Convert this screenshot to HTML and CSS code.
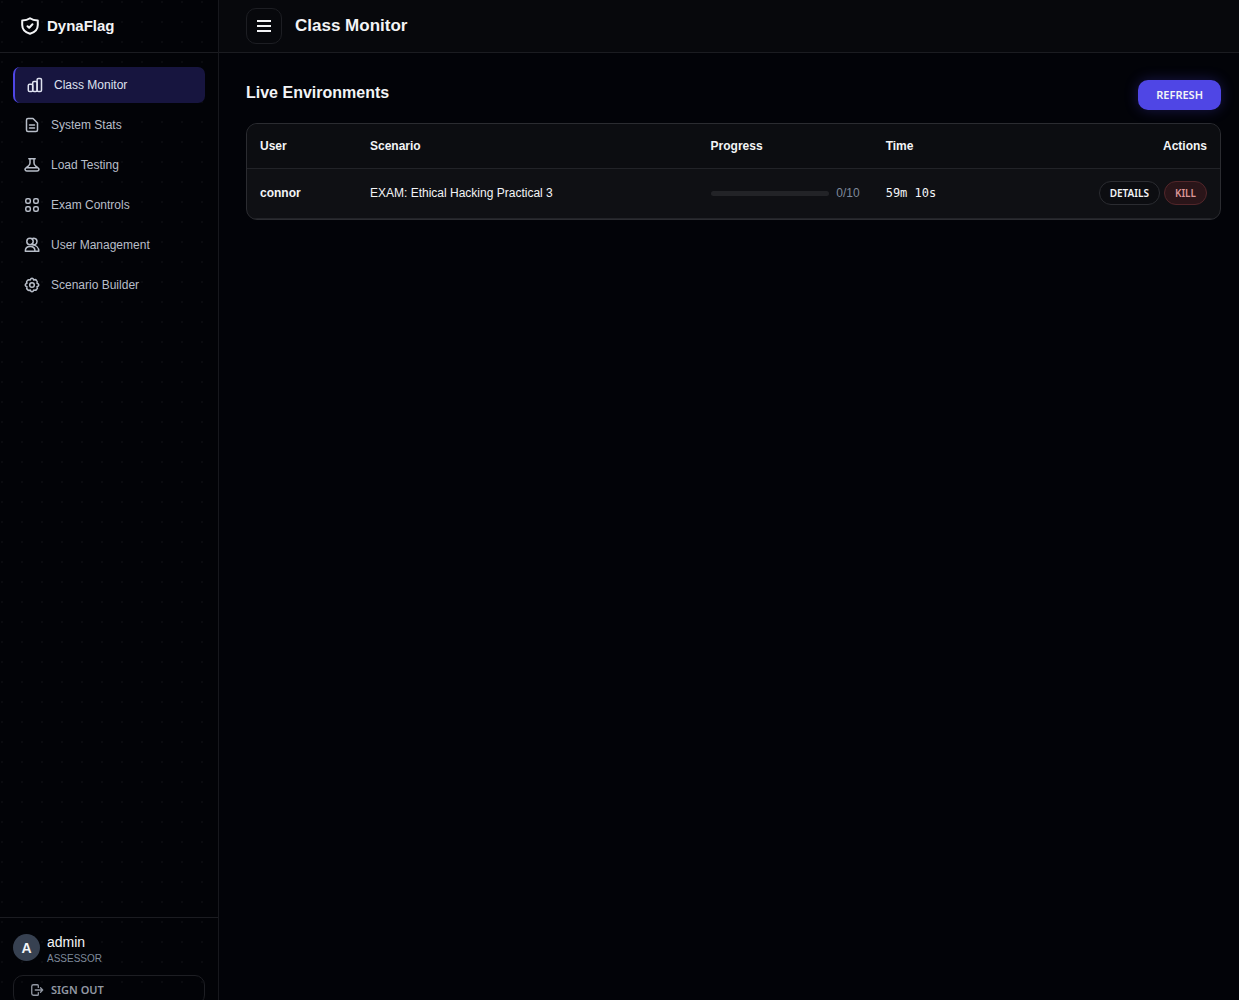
FILE: index.html
```html
<!DOCTYPE html>
<html lang="en">
<head>
<meta charset="utf-8">
<meta name="viewport" content="width=device-width, initial-scale=1">
<title>DynaFlag - Class Monitor</title>
<link rel="stylesheet" href="styles.css">
</head>
<body>
<div class="app">
  <aside class="sidebar">
    <div class="brand">
      <svg class="brand-icon" viewBox="0 0 18 18"><path d="M9 1.200C6.500 3 4 3.400 1.200 3.500V8C1.200 12.500 4.500 15.500 9 16.800C13.500 15.500 16.800 12.500 16.800 8V3.500C14 3.400 11.500 3 9 1.200Z"/><path d="M6.500 9.200L8.200 10.800L11.500 7.300"/></svg>
      <span>DynaFlag</span>
    </div>
    <nav class="nav">
      <a class="nav-link active" href="#monitor"><svg class="icon" viewBox="0 0 16 16"><rect x="1.300" y="7.200" width="4.400" height="7.300" rx="1.300"/><rect x="5.700" y="4.500" width="4.400" height="10" rx="1.300"/><rect x="10.100" y="1.500" width="4.400" height="13" rx="1.300"/></svg>Class Monitor</a>
      <a class="nav-link" href="#stats"><svg class="icon" viewBox="0 0 16 16"><path d="M4 1.500H9L13.500 6V13A1.500 1.500 0 0 1 12 14.500H4A1.500 1.500 0 0 1 2.500 13V3A1.500 1.500 0 0 1 4 1.500ZM5.500 8H10.500M5.500 11H10.500"/></svg>System Stats</a>
      <a class="nav-link" href="#load"><svg class="icon" viewBox="0 0 16 16"><path d="M4.800 1.800H11.200M6 1.800V6Q6 7.500 4.500 8.800L2 10.800Q.8 11.700 1.100 12.800Q1.400 14 2.800 14H13.200Q14.600 14 14.900 12.800Q15.200 11.700 14 10.800L11.500 8.800Q10 7.500 10 6V1.800M2.500 10.800H13.500"/></svg>Load Testing</a>
      <a class="nav-link" href="#exam"><svg class="icon" viewBox="0 0 16 16"><rect x="1.800" y="1.800" width="4.500" height="4.500" rx="1.500"/><rect x="9.700" y="1.800" width="4.500" height="4.500" rx="1.500"/><rect x="1.800" y="9.700" width="4.500" height="4.500" rx="1.500"/><rect x="9.700" y="9.700" width="4.500" height="4.500" rx="1.500"/></svg>Exam Controls</a>
      <a class="nav-link" href="#users"><svg class="icon" viewBox="0 0 16 16"><circle cx="6" cy="4.500" r="3.200"/><path d="M8 2C9 .8 13 .9 13 4.500S9.500 8.500 8 7M1.300 14.200C1.300 11.200 3.300 9.500 6.200 9.500S11 11.200 11 14.200ZM8 7.800C12 8 14.800 10.500 14.800 14.200H11"/></svg>User Management</a>
      <a class="nav-link" href="#builder"><svg class="icon" viewBox="0 0 16 16"><path d="M8 1.200Q9.200 1.200 9.700 3Q11.500 2 12.500 3.500Q13.700 4.400 13 6.300Q14.800 6.800 14.800 8T13 9.700Q14 11.500 12.500 12.500Q11.600 13.900 9.700 13Q9.200 14.800 8 14.800T6.300 13Q4.500 14 3.500 12.500Q2.100 11.600 3 9.700Q1.200 9.200 1.200 8T3 6.300Q2 4.500 3.500 3.500Q4.400 2.100 6.300 3Q6.800 1.200 8 1.200Z"/><circle cx="8" cy="8" r="2.300"/></svg>Scenario Builder</a>
    </nav>
    <div class="account">
      <div class="profile">
        <div class="avatar">A</div>
        <div><div class="name">admin</div><div class="role">ASSESSOR</div></div>
      </div>
      <button class="signout" type="button"><svg class="icon small" viewBox="0 0 16 16"><path d="M9.500 5V3Q9.500 2 8.500 2H4Q2 2 2 4V12Q2 14 4 14H8.500Q9.500 14 9.500 13V11M6 8H14.500M12 5.500L14.500 8L12 10.500"/></svg>SIGN OUT</button>
    </div>
  </aside>
  <div class="content">
    <header class="topbar">
      <button class="menu" type="button" aria-label="Toggle menu"><svg viewBox="0 0 16 16"><path d="M1 3H15M1 8H15M1 13H15"/></svg></button>
      <h1>Class Monitor</h1>
    </header>
    <main class="main">
      <div class="section-head"><h2>Live Environments</h2><button class="refresh" type="button">REFRESH</button></div>
      <div class="card">
        <table>
          <thead><tr><th class="c-user">User</th><th class="c-scenario">Scenario</th><th class="c-progress">Progress</th><th class="c-time">Time</th><th class="c-actions">Actions</th></tr></thead>
          <tbody><tr>
            <td class="user">connor</td><td>EXAM: Ethical Hacking Practical 3</td>
            <td><div class="progress"><div class="track"></div><span>0/10</span></div></td>
            <td class="time">59m 10s</td>
            <td><div class="actions"><button class="pill" type="button">DETAILS</button><button class="pill danger" type="button">KILL</button></div></td>
          </tr></tbody>
        </table>
      </div>
    </main>
  </div>
</div>
</body>
</html>
```
FILE: styles.css
```css
* { box-sizing: border-box; }
body { margin: 0; background: #020308; color: #f3f4f6; font: 12px/20px "Liberation Sans", Arial, sans-serif; }
button { font: 600 11px/16px "Noto Sans", sans-serif; color: #f3f4f6; cursor: pointer; }
svg { fill: none; stroke: currentColor; stroke-linecap: round; stroke-linejoin: round; }
.app { display: flex; height: 100vh; overflow: hidden; }
.sidebar { display: flex; flex-direction: column; flex: none; width: 219px; border-right: 1px solid #17181d; background: #020307 radial-gradient(circle at 2px 2px, rgba(255, 255, 255, .03) 1px, transparent 1px) 0 0 / 20px 20px; }
.brand { display: flex; flex: none; align-items: center; gap: 8px; height: 53px; padding: 0 21px; border-bottom: 1px solid #1b1c21; font-size: 15px; font-weight: 700; line-height: 24px; }
.brand-icon { width: 18px; height: 18px; stroke-width: 2; }
.nav { display: flex; flex: 1; flex-direction: column; gap: 4px; padding: 14px 13px; }
.nav-link { display: flex; align-items: center; gap: 11px; height: 36px; padding: 0 11px; border-radius: 7px; color: #b8bec9; text-decoration: none; }
.nav-link.active { padding-left: 12px; border-left: 2px solid #4f46e5; background: #17153f; color: #dfe2f0; }
.icon { flex: none; width: 16px; height: 16px; stroke-width: 1.500; }
.icon.small { width: 14px; height: 14px; }
.account { flex: none; height: 83px; padding: 16px 13px 0; border-top: 1px solid #1b1c21; }
.profile { display: flex; align-items: flex-start; gap: 7px; margin-bottom: 9px; }
.avatar { display: grid; place-items: center; width: 27px; height: 27px; border-radius: 50%; background: #374151; font-size: 14px; font-weight: 700; }
.name { font-size: 14px; line-height: 17px; }
.role { color: #7e899b; font-size: 10px; line-height: 15px; }
.signout { display: flex; align-items: center; gap: 7px; width: 100%; height: 30px; padding: 0 16px; border: 1px solid #1d1e23; border-radius: 10px; background: transparent; color: #9298a3; }
.content { flex: 1; min-width: 0; }
.topbar { display: flex; align-items: center; gap: 13px; height: 53px; padding: 0 27px; border-bottom: 1px solid #1b1c21; background: #07080c; }
.menu { display: grid; place-items: center; width: 36px; height: 36px; padding: 0; border: 1px solid #1d1e23; border-radius: 10px; background: transparent; }
.menu svg { width: 16px; height: 16px; stroke-width: 2; stroke-linecap: butt; }
h1, h2 { margin: 0; font-weight: 700; }
h1 { font-size: 17px; line-height: 24px; }
h2 { font-size: 16px; line-height: 26px; }
.main { padding: 27px 18px 27px 27px; }
.section-head { display: flex; align-items: flex-start; justify-content: space-between; margin-bottom: 13px; }
.refresh { height: 30px; padding: 0 18px; border: 0; border-radius: 10px; background: #4f46e5; box-shadow: 0 0 14px rgba(79, 70, 229, .3); }
.card { overflow: hidden; border: 1px solid #2b2c31; border-radius: 11px; background: #0f1014; }
table { width: 100%; border-collapse: collapse; table-layout: fixed; }
th, td { padding: 0 13px; text-align: left; }
th { height: 44px; background: #0c0d11; }
td { height: 50px; border-top: 1px solid #222328; border-bottom: 1px solid #222328; }
.c-user { width: 110px; }
.c-scenario { width: 35%; }
.c-progress { width: 18%; }
.c-time { width: 14%; }
.c-actions { text-align: right; }
.user { font-weight: 700; }
.progress { display: flex; align-items: center; gap: 7px; color: #7e899b; }
.track { flex: 1; height: 5px; border-radius: 3px; background: #222327; }
.time { font-family: "DejaVu Sans Mono", monospace; }
.actions { display: flex; justify-content: flex-end; gap: 4px; }
.pill { height: 24px; padding: 0 10px; border: 1px solid #2b2c31; border-radius: 12px; background: #0c0d11; font-size: 10px; }
.pill.danger { border-color: #52262a; background: #2a1519; color: #dc9696; }
```
